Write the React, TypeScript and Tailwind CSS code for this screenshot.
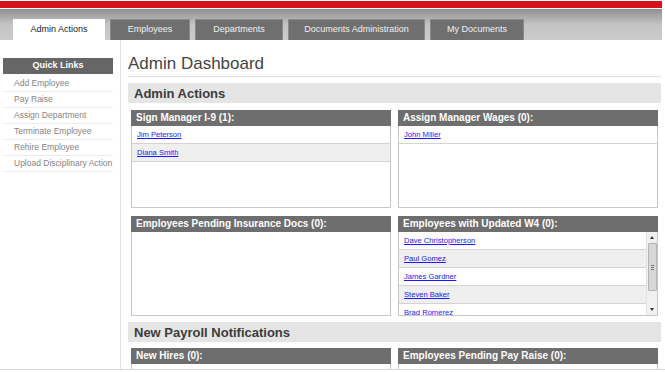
import React from "react";

const Link = ({ children }: { children: React.ReactNode }) => (
  <a href="#" className="text-[7.6px] text-[#1a1aff] underline leading-none">
    {children}
  </a>
);

const Row = ({ name, alt }: { name: string; alt?: boolean }) => (
  <div className={`h-[18px] flex items-center pl-[5px] border-b border-[#d4d4d4] ${alt ? "bg-[#efefef]" : "bg-white"}`}>
    <Link>{name}</Link>
  </div>
);

const Panel = ({ title, children, h = "h-[82px]" }: { title: string; children?: React.ReactNode; h?: string }) => (
  <div className="w-[260px] flex flex-col">
    <div className="h-[16px] bg-[#6e6e6e] flex items-center px-[5px] text-white font-bold text-[10px] leading-none">
      {title}
    </div>
    <div className={`${h} border border-t-0 border-[#c8c8c8] bg-white overflow-hidden`}>{children}</div>
  </div>
);

const Section = ({ title }: { title: string }) => (
  <div className="h-[20px] bg-[#e5e5e5] flex items-center pl-[6px] text-[13px] font-bold text-[#3c3c3c] leading-none">
    {title}
  </div>
);

export default function App() {
  const tabs = [
    { t: "Employees", w: "w-[80px]" },
    { t: "Departments", w: "w-[88px]" },
    { t: "Documents Administration", w: "w-[137px]" },
    { t: "My Documents", w: "w-[94px]" },
  ];
  const links = ["Add Employee", "Pay Raise", "Assign Department", "Terminate Employee", "Rehire Employee", "Upload Disciplinary Action"];
  return (
    <div className="w-[665px] h-[372px] bg-white overflow-hidden relative" style={{ fontFamily: '"Liberation Sans", Arial, sans-serif' }}>
      <div className="w-[662px]">
        <div className="h-[1px] bg-white" />
        <div className="h-[7px] bg-[#d5121e]" />
        <div className="h-[1px] bg-[#fbfbfb]" />
        <div className="h-[31px] bg-gradient-to-b from-[#8f8f8f] via-[#c4c4c4] to-[#cbcbcb] flex items-end pl-[13px] gap-[5px]">
          <div className="w-[92px] h-[21px] bg-white flex items-center justify-center text-[9px] text-[#222]">Admin Actions</div>
          {tabs.map((tb) => (
            <div key={tb.t} className={`${tb.w} h-[21px] bg-[#6f6f6f] border border-b-0 border-[#8a8a8a] flex items-center justify-center text-[9px] text-[#f0f0f0]`}>
              {tb.t}
            </div>
          ))}
        </div>
      </div>
      <div className="flex">
        <div className="w-[121px] h-[332px] border-r border-[#e2e2e2] pt-[18px] pl-[3px] pr-[7px]">
          <div className="h-[16px] bg-[#666] flex items-center justify-center text-white font-bold text-[9px]">Quick Links</div>
          <div className="mt-[2px]">
            {links.map((l) => (
              <div key={l} className="h-[16px] flex items-center pl-[11px] border-b border-[#ececec] text-[8.5px] text-[#858585]">
                {l}
              </div>
            ))}
          </div>
        </div>
        <div className="w-[533px] ml-[7px]">
          <div className="h-[37px] flex items-end pb-[4px] border-b border-[#e0e0e0] text-[17px] text-[#444] leading-none">
            Admin Dashboard
          </div>
          <div className="mt-[6px]">
            <Section title="Admin Actions" />
          </div>
          <div className="flex gap-[7px] pl-[3px] mt-[7px]">
            <Panel title="Sign Manager I-9 (1):">
              <Row name="Jim Peterson" />
              <Row name="Diana Smith" alt />
            </Panel>
            <Panel title="Assign Manager Wages (0):">
              <Row name="John Miller" />
            </Panel>
          </div>
          <div className="flex gap-[7px] pl-[3px] mt-[8px]">
            <Panel title="Employees Pending Insurance Docs (0):" h="h-[84px]" />
            <Panel title="Employees with Updated W4 (0):" h="h-[84px]">
              <div className="flex h-full">
                <div className="flex-1 overflow-hidden">
                  <Row name="Dave Christopherson" />
                  <Row name="Paul Gomez" alt />
                  <Row name="James Gardner" />
                  <Row name="Steven Baker" alt />
                  <Row name="Brad Romerez" />
                </div>
                <div className="w-[11px] bg-[#f0f0f0] border-l border-[#e4e4e4] flex flex-col items-center">
                  <div className="h-[11px] flex items-center justify-center">
                    <div className="w-0 h-0 border-l-[2px] border-r-[2px] border-b-[3px] border-l-transparent border-r-transparent border-b-[#333]" />
                  </div>
                  <div className="w-[9px] h-[48px] bg-[#d7d7d7] border border-[#b5b5b5] rounded-[1px] flex flex-col items-center justify-center gap-[1px]">
                    <div className="w-[3px] h-px bg-[#777]" />
                    <div className="w-[3px] h-px bg-[#777]" />
                    <div className="w-[3px] h-px bg-[#777]" />
                  </div>
                  <div className="flex-1" />
                  <div className="h-[11px] flex items-center justify-center">
                    <div className="w-0 h-0 border-l-[2px] border-r-[2px] border-t-[3px] border-l-transparent border-r-transparent border-t-[#333]" />
                  </div>
                </div>
              </div>
            </Panel>
          </div>
          <div className="mt-[6px]">
            <Section title="New Payroll Notifications" />
          </div>
          <div className="flex gap-[7px] pl-[3px] mt-[6px]">
            <Panel title="New Hires (0):" h="h-[20px]" />
            <Panel title="Employees Pending Pay Raise (0):" h="h-[20px]" />
          </div>
        </div>
      </div>
      <div className="absolute left-0 right-0 bottom-0 h-[3px] bg-white border-t border-[#d8d8d8]" />
    </div>
  );
}
